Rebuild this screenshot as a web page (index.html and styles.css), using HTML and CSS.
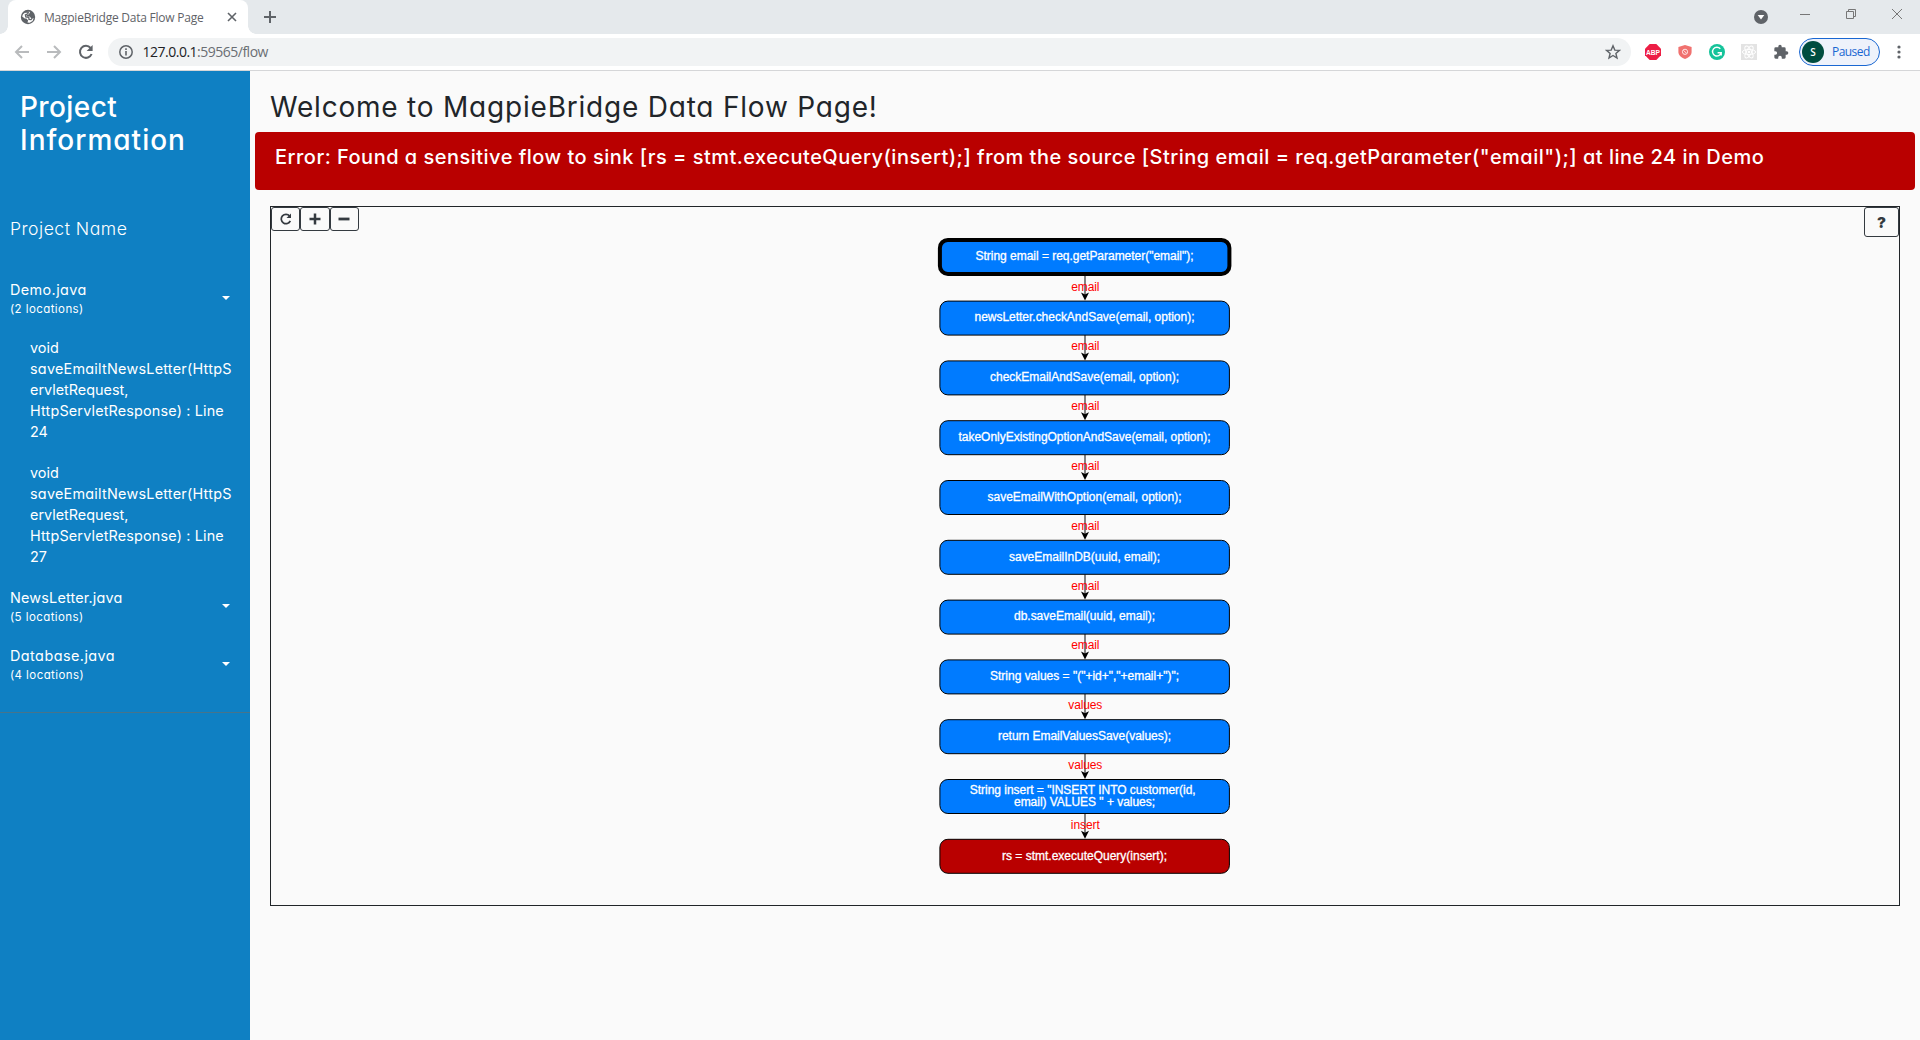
FILE: index.html
```html
<!DOCTYPE html>
<html lang="en"><head><meta charset="utf-8"><title>MagpieBridge Data Flow Page</title>
<link rel="stylesheet" href="styles.css"></head>
<body>
<header class="browser">
  <div class="tabstrip">
    <div class="tab">
      <svg class="globe" width="16" height="16" viewBox="0 0 16 16"><circle cx="8" cy="8" r="7.2" fill="#5f6368"/><path d="M9 2.200 10 3.600 8.600 5.600 6.400 6.200 6.800 7.600 9.600 7.400 11 9 13.600 9.200 12.600 12 9.600 13.800 7.400 13.600 8.200 11.400 6.400 9.600 4.800 9.400 2.200 7.400 3 5.200 5.200 3.400Z" fill="#fff"/><path d="M5 3 8.400 3 7.800 4.800 5.400 5.800 5.800 8 8.800 8.400 9 10.400 11 10.600 12.400 8.800" fill="none" stroke="#5f6368" stroke-width="1.300"/></svg>
      <span class="tab-title">MagpieBridge Data Flow Page</span>
      <svg width="10" height="10" viewBox="0 0 10 10"><path d="M1 1 9 9M9 1 1 9" stroke="#5f6368" stroke-width="1.6"/></svg>
    </div>
    <svg class="newtab" width="14" height="14" viewBox="0 0 14 14"><path d="M7 1V13M1 7H13" stroke="#5f6368" stroke-width="2"/></svg>
    <div class="window-controls">
      <svg width="14" height="14" viewBox="0 0 14 14"><circle cx="7" cy="7" r="7" fill="#5f6368"/><path d="M3.7 5H10.3L7 9.4Z" fill="#fff"/></svg>
      <svg width="10" height="10" viewBox="0 0 10 10"><path d="M0 5.500H10" stroke="#777"/></svg>
      <svg width="10" height="10" viewBox="0 0 10 10"><path d="M.5 2.5H7.5V9.5H.5ZM2.5 2.5V.5H9.5V7.5H7.5" fill="none" stroke="#777"/></svg>
      <svg width="10" height="10" viewBox="0 0 10 10"><path d="M0 0 10 10M10 0 0 10" stroke="#777"/></svg>
    </div>
  </div>
  <div class="toolbar">
    <svg class="nav off" width="16" height="16" viewBox="0 0 16 16"><path d="M15 8H2M8 2 2 8 8 14" /></svg>
    <svg class="nav off" width="16" height="16" viewBox="0 0 16 16"><path d="M1 8H14M8 2 14 8 8 14" /></svg>
    <svg class="nav" width="16" height="16" viewBox="0 0 16 16"><path d="M13.6 10A6 6 0 1 1 12.6 4"/><path d="M14.6 1V7H8.6Z" fill="#5f6368" stroke="none"/></svg>
    <div class="omnibox">
      <svg width="14" height="14" viewBox="0 0 14 14"><circle cx="7" cy="7" r="6.2" fill="none" stroke="#5f6368" stroke-width="1.5"/><path d="M7 6V10.6M7 3.3V5" stroke="#5f6368" stroke-width="1.6"/></svg>
      <span class="url">127.0.0.1<span class="path">:59565/flow</span></span>
      <svg class="star" width="16" height="16" viewBox="0 0 16 16"><path d="M8 1.8 9.8 6.1 14.4 6.4 10.9 9.4 12 14 8 11.5 4 14 5.1 9.4 1.6 6.4 6.2 6.1Z" fill="none" stroke="#5f6368" stroke-width="1.4"/></svg>
    </div>
    <div class="extensions">
      <svg width="16" height="16" viewBox="0 0 16 16"><path d="M4.7 0H11.3L16 4.7V11.3L11.3 16H4.7L0 11.3V4.7Z" fill="#ed1e45"/><text x="8" y="10.8" text-anchor="middle" textLength="14" lengthAdjust="spacingAndGlyphs" class="abp">ABP</text></svg>
      <svg width="16" height="16" viewBox="0 0 16 16"><path d="M8 1 14.6 3V8C14.6 11.5 11 14 8 15 5 14 1.4 11.5 1.4 8V3Z" fill="#f0716f"/><circle cx="8" cy="7.8" r="2.6" fill="none" stroke="#ffe4e4"/><path d="M6.4 6.2 9.6 9.4" stroke="#ffe4e4"/></svg>
      <svg width="16" height="16" viewBox="0 0 16 16"><circle cx="8" cy="8" r="8" fill="#15c39a"/><path d="M11.3 4.8A4.400 4.400 0 1 0 12.200 8.800H8.6M12.200 8.600V11.600" fill="none" stroke="#fff" stroke-width="1.4"/></svg>
      <svg width="16" height="16" viewBox="0 0 16 16"><path fill="#e3e3e3" d="M0 0H16V16H0Z"/><g fill="none" stroke="#fff"><ellipse cx="8" cy="8" rx="6.6" ry="2.6"/><ellipse cx="8" cy="8" rx="6.6" ry="2.6" transform="rotate(60 8 8)"/><ellipse cx="8" cy="8" rx="6.6" ry="2.6" transform="rotate(120 8 8)"/></g><circle cx="8" cy="8" r="1.3" fill="#fff"/></svg>
      <svg width="16" height="16" viewBox="0 0 24 24"><path fill="#5f6368" d="M20.5 11H19V7a2 2 0 0 0-2-2h-4V3.500a2.500 2.500 0 0 0-5 0V5H4a2 2 0 0 0-2 2v3.800h1.500a2.700 2.700 0 0 1 0 5.400H2V20a2 2 0 0 0 2 2h3.800v-1.500a2.700 2.700 0 0 1 5.400 0V22H17a2 2 0 0 0 2-2v-4h1.500a2.500 2.500 0 0 0 0-5z"/></svg>
    </div>
    <div class="profile"><span class="avatar">S</span><span class="paused">Paused</span></div>
    <svg class="menu" width="4" height="14" viewBox="0 0 4 14" fill="#5f6368"><circle cx="2" cy="2" r="1.6"/><circle cx="2" cy="7" r="1.6"/><circle cx="2" cy="12" r="1.6"/></svg>
  </div>
</header>
<div class="page">
  <aside class="sidebar">
    <h3 class="brand"><span class="b1">Project</span><br><span class="b2">Information</span></h3>
    <p class="project">Project Name</p>
    <ul class="files">
      <li class="file"><a class="toggle"><span><span class="name n1">Demo.java</span><small>(2 locations)</small></span><i class="caret"></i></a>
        <ul class="locations">
          <li>void<br><span class="sig1">saveEmailtNewsLetter(HttpS</span><br><span class="sig2">ervletRequest,</span><br><span class="sig3">HttpServletResponse) : Line</span><br>24</li>
          <li>void<br><span class="sig1">saveEmailtNewsLetter(HttpS</span><br><span class="sig2">ervletRequest,</span><br><span class="sig3">HttpServletResponse) : Line</span><br>27</li>
        </ul></li>
      <li class="file"><a class="toggle"><span><span class="name n2">NewsLetter.java</span><small>(5 locations)</small></span><i class="caret"></i></a></li>
      <li class="file"><a class="toggle"><span><span class="name n3">Database.java</span><small>(4 locations)</small></span><i class="caret"></i></a></li>
    </ul>
  </aside>
  <main class="content">
    <h2 class="welcome">Welcome to MagpieBridge Data Flow Page!</h2>
    <div class="alert"><span>Error: Found a sensitive flow to sink [rs = stmt.executeQuery(insert);] from the source [String email = req.getParameter("email");] at line 24 in Demo</span></div>
    <section class="graph">
      <div class="tools">
        <button><svg width="12" height="12" viewBox="0 0 12 12"><path d="M10.300 7.800A4.700 4.700 0 1 1 9.600 3" fill="none" stroke="#343a40" stroke-width="1.700"/><path d="M11 0.500V5H6.500Z" fill="#343a40"/></svg></button>
        <button><svg width="12" height="12" viewBox="0 0 12 12"><path d="M6 .5V11.500M.5 6H11.500" stroke="#343a40" stroke-width="2.500"/></svg></button>
        <button><svg width="12" height="12" viewBox="0 0 12 12"><path d="M.5 6H11.500" stroke="#343a40" stroke-width="2.800"/></svg></button>
      </div>
      <svg class="flow" width="1628" height="698" viewBox="271 207 1628 698"></svg>
      <button class="help">?</button>
    </section>
  </main>
</div>
<script src="flow.js"></script>
</body></html>
```
FILE: flow.js
```js
// Statements along the path; each edge carries the tainted variable to the next node.
const nodes = [
  [['String email = req.getParameter("email");', 218]],
  [['newsLetter.checkAndSave(email, option);', 220]],
  [['checkEmailAndSave(email, option);', 189]],
  [['takeOnlyExistingOptionAndSave(email, option);', 252]],
  [['saveEmailWithOption(email, option);', 194]],
  [['saveEmailInDB(uuid, email);', 151]],
  [['db.saveEmail(uuid, email);', 141]],
  [['String values = "("+id+","+email+")";', 189]],
  [['return EmailValuesSave(values);', 173]],
  [['String insert = "INSERT INTO customer(id,', 226], ['email) VALUES " + values;', 141]],
  [['rs = stmt.executeQuery(insert);', 165]]
];
const edges = ['email', 'email', 'email', 'email', 'email', 'email', 'email', 'values', 'values', 'insert'];
const CX = 1085, TOP = 258.300, PITCH = 59.800;
const flow = document.querySelector('.flow');
function add(tag, attrs, text) {
  const el = document.createElementNS('http://www.w3.org/2000/svg', tag);
  for (const k in attrs) el.setAttribute(k, attrs[k]);
  if (text) el.textContent = text;
  flow.appendChild(el);
}
edges.forEach((label, i) => {
  const y = TOP + i * PITCH;
  const end = y + PITCH - 17.500;
  add('line', { x1: CX, y1: y + 17, x2: CX, y2: end - 4, class: 'edge' });
  add('path', { d: `M${CX} ${end}l-4-8 4 2 4-2z`, class: 'arrow' });
  add('text', { x: CX + 0.300, y: y + 32.300, class: 'edge-label', textLength: label === 'values' ? 34 : label === 'insert' ? 29 : 28 }, label);
});
nodes.forEach((lines, i) => {
  const y = i ? TOP + i * PITCH : 256.900;
  const kind = i === 0 ? 'node source' : i === nodes.length - 1 ? 'node sink' : 'node';
  add('rect', { x: 939.900, y: y - 17, width: 289.500, height: 34, rx: 8, class: kind });
  lines.forEach(([text, width], j) => add('text', {
    x: 1084.500 - (lines.length > 1 && j === 0 ? 1.800 : 0), y: y + 3.200 + (lines.length > 1 ? j * 12 - 6 : 0),
    textLength: width, class: 'node-label'
  }, text));
});
```
FILE: styles.css
```css
* { box-sizing: border-box; }
body { margin: 0; width: 1920px; height: 1040px; overflow: hidden; background: #fafafa; font-family: Inter, sans-serif; font-feature-settings: "cv11"; color: #212529; }
svg { display: block; flex: none; }
.browser { font-family: "Open Sans", sans-serif; font-feature-settings: normal; height: 71px; border-bottom: 1px solid #d5d6d8; background: #fff; }
.tabstrip { height: 34px; background: #e5e9ec; display: flex; align-items: center; padding-left: 8px; }
.tab { position: relative; width: 240px; height: 34px; background: #fff; border-radius: 8px 8px 0 0; display: flex; align-items: center; padding: 0 11px 0 12px; }
.tab::before, .tab::after { content: ""; position: absolute; bottom: 0; width: 8px; height: 8px; }
.tab::before { left: -8px; background: radial-gradient(circle at 0 0, transparent 7.500px, #fff 8px); }
.tab::after { right: -8px; background: radial-gradient(circle at 100% 0, transparent 7.500px, #fff 8px); }
.tab-title { margin-left: 8px; flex: 1; font-size: 12px; letter-spacing: -.24px; color: #5f6368; white-space: nowrap; }
.newtab { margin-left: 15px; }
.window-controls { margin-left: auto; display: flex; align-items: center; padding-right: 18px; }
.window-controls svg + svg { margin-left: 36px; margin-bottom: 6px; }
.window-controls svg:nth-child(2) { margin-left: 32px; }
.toolbar { height: 36px; display: flex; align-items: center; padding-left: 14px; }
.nav { margin-right: 16px; fill: none; stroke: #5f6368; stroke-width: 2; }
.off { stroke: #b9bbbd; }
.omnibox { width: 1523px; height: 28px; border-radius: 14px; background: #f1f3f4; display: flex; align-items: center; padding: 0 10px 0 11px; margin-left: -2px; }
.url { margin: -1px 0 0 9.500px; font-size: 14px; letter-spacing: -.5px; color: #202124; }
.path { color: #6a6e73; }
.star { margin-left: auto; }
.extensions { display: flex; gap: 16px; margin-left: 14px; }
.abp { font: bold 7.500px "Liberation Sans", sans-serif; fill: #fff; }
.profile { margin-left: 10px; width: 81px; height: 28px; border: 1px solid #1967d2; border-radius: 14px; background: #eef2fb; display: flex; align-items: center; padding-left: 2px; }
.avatar { width: 22px; height: 22px; border-radius: 50%; background: #004d40; color: #fff; font-size: 10px; font-weight: 600; text-align: center; line-height: 22px; }
.paused { margin: -1px 0 0 8px; color: #1967d2; font-size: 12px; letter-spacing: -.55px; }
.menu { margin-left: 16.500px; }
.page { display: flex; height: 969px; }
.sidebar { width: 250px; background: #0f80c3; color: #fff; font-weight: 400; }
h2, h3, p, ul { margin: 0; padding: 0; }
ul { list-style: none; }
.brand { padding: 20px 20px 0; font-size: 28px; line-height: 33px; font-weight: 500; height: 133px; }
.b1 { letter-spacing: .4px; }
.b2 { letter-spacing: 1px; }
.project { padding: 10px; font-size: 17.600px; line-height: 30px; height: 65px; font-weight: 300; letter-spacing: .5px; }
.toggle { display: flex; justify-content: space-between; align-items: center; height: 58px; padding: 0 20px 0 10px; }
.name { display: block; font-size: 14.400px; line-height: 21px; }
.n1 { letter-spacing: .4px; }
.n2 { letter-spacing: .18px; }
.n3 { letter-spacing: .45px; }
small { display: block; font-size: 11.500px; line-height: 18px; letter-spacing: .42px; }
.caret { border: 4.500px solid transparent; border-top-color: #fff; border-bottom: 0; }
.locations li { height: 125px; padding: 10px 0 10px 30px; font-size: 14.400px; line-height: 21px; white-space: nowrap; }
.sig1 { letter-spacing: .24px; }
.sig3 { letter-spacing: .16px; }
.files { border-bottom: 1px solid #47748b; padding-bottom: 19px; }
.content { flex: 1; padding: 20px 5px 0; }
.welcome { margin-left: 15px; font-size: 28px; line-height: 33px; font-weight: 400; height: 41px; white-space: nowrap; letter-spacing: .79px; }
.alert { height: 58px; border-radius: 4px; background: #b90000; color: #fff; padding: 13px 20px; font-size: 20px; line-height: 24px; font-weight: 500; white-space: nowrap; letter-spacing: .485px; }
.graph { position: relative; margin: 16px 15px 0; height: 700px; border: 1px solid #212529; }
.tools { position: absolute; display: flex; }
button { width: 29.300px; height: 24px; padding: 0; border: 1px solid #343a40; border-radius: 3px; background: transparent; color: #343a40; display: flex; align-items: center; justify-content: center; }
.help { position: absolute; right: 0; top: 0; width: 35px; height: 30px; font: 900 15px Inter, sans-serif; }
.node { fill: #007bff; stroke: #000; stroke-width: 1; }
.source { stroke-width: 4; }
.sink { fill: #b90000; }
.node-label { font: 12px "Liberation Sans", Arial, sans-serif; fill: #fff; stroke: #fff; stroke-width: .3; text-anchor: middle; }
.edge-label { font: 12px "Liberation Sans", Arial, sans-serif; fill: #f00; text-anchor: middle; }
.edge { stroke: #333; stroke-width: 1.200; }
```
